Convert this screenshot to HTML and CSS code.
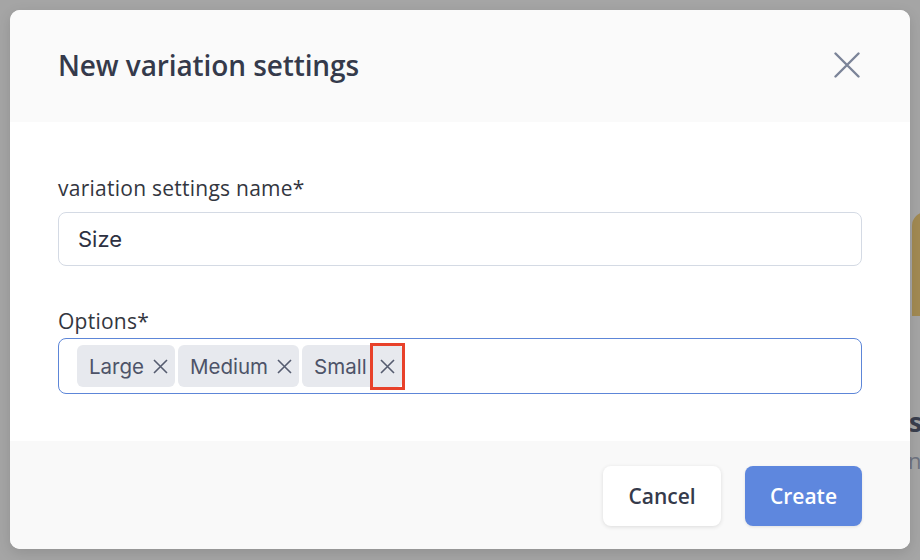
FILE: index.html
```html
<!DOCTYPE html>
<html>
<head>
<meta charset="utf-8">
<link rel="stylesheet" href="styles.css">
</head>
<body>
<div class="backdrop">
  <div class="bg-shape"></div>
  <div class="bg-text1">s</div>
  <div class="bg-text2">nc</div>
  <div class="modal">
    <div class="modal-header">
      <h1 class="title">New variation settings</h1>
      <button class="close" aria-label="Close">
        <svg width="26" height="26" viewBox="0 0 26 26"><path d="M1.5 1.5L24.5 24.5M24.5 1.5L1.5 24.5" stroke="#7b8498" stroke-width="2.4" stroke-linecap="round"/></svg>
      </button>
    </div>
    <div class="modal-body">
      <div class="field">
        <label class="label">variation settings name*</label>
        <div class="input">Size</div>
      </div>
      <div class="field options">
        <label class="label">Options*</label>
        <div class="input tags">
          <span class="tag">Large<span class="x"><svg width="15" height="15" viewBox="0 0 15 15"><path d="M1 1L14 14M14 1L1 14" stroke="#555c70" stroke-width="1.6"/></svg></span></span>
          <span class="tag">Medium<span class="x"><svg width="15" height="15" viewBox="0 0 15 15"><path d="M1 1L14 14M14 1L1 14" stroke="#555c70" stroke-width="1.6"/></svg></span></span>
          <span class="tag last">Small<span class="x hl"><svg width="15" height="15" viewBox="0 0 15 15"><path d="M1 1L14 14M14 1L1 14" stroke="#555c70" stroke-width="1.6"/></svg></span></span>
        </div>
      </div>
    </div>
    <div class="modal-footer">
      <button class="btn cancel">Cancel</button>
      <button class="btn create">Create</button>
    </div>
  </div>
</div>
</body>
</html>
```

FILE: styles.css
```css
html, body {
  margin: 0;
  padding: 0;
  width: 920px;
  height: 560px;
  overflow: hidden;
}
body {
  background: #a5a5a5;
  font-family: "Open Sans", "Noto Sans", sans-serif;
}
.backdrop {
  position: relative;
  width: 920px;
  height: 560px;
  padding: 10px;
  box-sizing: border-box;
}
.bg-shape {
  position: absolute;
  left: 912px;
  top: 212px;
  width: 40px;
  height: 104px;
  background: #a28a52;
  border-radius: 14px 0 0 0;
}
.bg-text1 {
  position: absolute;
  left: 909px;
  top: 404px;
  font: 700 26px "Open Sans", sans-serif;
  color: #3a3f4e;
}
.bg-text2 {
  position: absolute;
  left: 908px;
  top: 445px;
  font: 400 22px "Open Sans", sans-serif;
  color: #6e7380;
}
.modal {
  position: relative;
  width: 900px;
  height: 539px;
  background: #ffffff;
  border-radius: 10px;
  overflow: hidden;
  display: flex;
  flex-direction: column;
  box-shadow: 0 4px 14px rgba(0,0,0,0.12);
}
.modal-header {
  height: 112px;
  background: #fafafa;
  display: flex;
  align-items: center;
  justify-content: space-between;
  padding: 0 50px 0 48px;
  box-sizing: border-box;
}
.title {
  margin: 0;
  margin-top: -2px;
  font-family: "Open Sans", sans-serif;
  font-weight: 600;
  font-size: 28px;
  letter-spacing: -0.1px;
  color: #353a4b;
}
.close {
  background: none;
  border: 0;
  padding: 0;
  margin-top: -2px;
  width: 26px;
  height: 26px;
  display: flex;
  cursor: pointer;
}
.modal-body {
  flex: 1;
  padding: 53px 48px 0 48px;
  display: flex;
  flex-direction: column;
  gap: 42px;
}
.field {
  display: flex;
  flex-direction: column;
  gap: 11px;
}
.field.options {
  gap: 4px;
}
.label {
  font-family: "Open Sans", sans-serif;
  font-size: 21px;
  letter-spacing: 0.25px;
  color: #333640;
  line-height: 26px;
}
.input {
  height: 54px;
  box-sizing: border-box;
  border: 1px solid #d4dae4;
  border-radius: 8px;
  padding: 0 19px;
  display: flex;
  align-items: center;
  font-family: "Inter", "Liberation Sans", sans-serif;
  font-size: 22px;
  color: #2d3142;
}
.tags {
  height: 56px;
  border-color: #5d86d8;
  padding: 0 18px;
  gap: 3px;
}
.tag {
  height: 42px;
  background: #e7e9ee;
  border-radius: 6px;
  display: flex;
  align-items: center;
  padding: 0 7px 0 12px;
  gap: 9px;
  font-size: 20.5px;
  color: #4d5368;
}
.tag.last {
  padding-right: 0;
  gap: 0;
}
.x {
  display: flex;
  align-items: center;
}
.x.hl {
  border: 3px solid #e8412a;
  height: 47px;
  width: 35px;
  box-sizing: border-box;
  justify-content: center;
  margin-left: 3px;
  margin-right: -2px;
}
.modal-footer {
  height: 108px;
  background: #f9f9f9;
  display: flex;
  justify-content: flex-end;
  align-items: center;
  gap: 24px;
  padding: 0 48px 4px 0;
  box-sizing: border-box;
}
.btn {
  height: 60px;
  border: 0;
  border-radius: 8px;
  font-family: "Open Sans", sans-serif;
  font-weight: 600;
  font-size: 21px;
  cursor: pointer;
  margin-top: 6px;
}
.cancel {
  width: 118px;
  background: #ffffff;
  color: #353a4b;
  box-shadow: 0 1px 4px rgba(0,0,0,0.12);
}
.create {
  width: 117px;
  background: #5e87de;
  color: #ffffff;
  box-shadow: 0 1px 3px rgba(0,0,0,0.1);
}
```
